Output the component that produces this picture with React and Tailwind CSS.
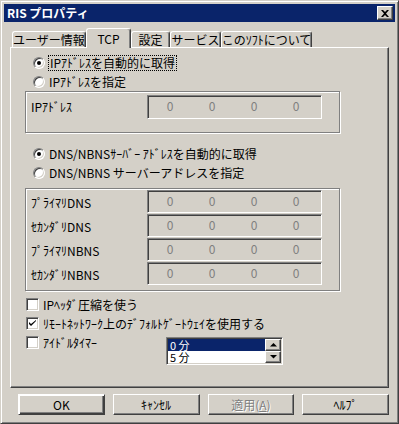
import React from "react";

const sunken =
  "border border-t-[#808080] border-l-[#808080] border-r-white border-b-white shadow-[inset_1px_1px_0_#404040,inset_-1px_-1px_0_#d4d0c8]";
const etched =
  "border border-[#808080] shadow-[inset_1px_1px_0_#fff,1px_1px_0_#fff]";
const button =
  "flex items-center justify-center w-[87px] h-[21px] border border-t-white border-l-white border-r-[#404040] border-b-[#404040] shadow-[inset_-1px_-1px_0_#808080]";

const Radio = ({ checked }) => (
  <span className="relative w-[12px] h-[12px] rounded-full bg-white border border-t-[#808080] border-l-[#808080] border-r-white border-b-white shadow-[inset_1px_1px_0_#404040,inset_-1px_-1px_0_#d4d0c8] flex items-center justify-center shrink-0">
    {checked && <span className="w-[4px] h-[4px] rounded-full bg-black" />}
  </span>
);

const RadioRow = ({ checked, focus, children }) => (
  <div className="h-[19px] flex items-center pl-[8px]">
    <Radio checked={checked} />
    <span
      className={
        focus
          ? "ml-[3px] px-[1px] py-[1px] border border-dotted border-black"
          : "ml-[4px] py-[2px]"
      }
    >
      {children}
    </span>
  </div>
);

const Check = ({ checked }) => (
  <span className={`w-[13px] h-[13px] bg-white shrink-0 flex items-center justify-center ${sunken}`}>
    {checked && (
      <svg width="7" height="7" viewBox="0 0 7 7">
        <path d="M0 2 L0 4 L2 6 L7 1 L7 0 L2 4 Z" fill="#000" />
      </svg>
    )}
  </span>
);

const IpField = ({ h }) => (
  <div className={`w-[175px] ${h} bg-[#d4d0c8] flex pl-[1px] ${sunken}`}>
    {[0, 1, 2, 3].map((i) => (
      <span key={i} className="w-[42px] text-center text-[#808080] pt-[4px]">
        0
      </span>
    ))}
  </div>
);

const Tab = ({ label, w, active }) =>
  active ? (
    <div
      className={`${w} h-[20px] -mb-[1px] relative z-10 bg-[#d4d0c8] rounded-t-[3px] border-t border-l border-r border-t-white border-l-white border-r-[#404040] shadow-[inset_-1px_0_0_#808080] flex justify-center pt-[4px] whitespace-nowrap`}
    >
      {label}
    </div>
  ) : (
    <div
      className={`${w} h-[16px] rounded-t-[3px] border-t border-l border-r border-t-white border-l-white border-r-[#404040] shadow-[inset_-1px_0_0_#808080] flex justify-center pt-[2px] whitespace-nowrap`}
    >
      {label}
    </div>
  );

export default function App() {
  return (
    <div className="w-[399px] h-[424px] bg-[#d4d0c8] border border-t-[#d4d0c8] border-l-[#d4d0c8] border-r-[#404040] border-b-[#404040] shadow-[inset_1px_1px_0_#fff,inset_-1px_-1px_0_#808080] p-[3px] flex flex-col font-['Noto_Sans_CJK_JP','Noto_Sans',sans-serif] text-[12px] leading-[12px] text-black overflow-hidden">
      {/* title bar */}
      <div className="h-[18px] bg-[#0a246a] flex items-center justify-between pl-[3px] pr-[2px]">
        <span className="text-white font-bold">RIS プロパティ</span>
        <span className="w-[16px] h-[14px] bg-[#d4d0c8] border border-t-white border-l-white border-r-[#404040] border-b-[#404040] shadow-[inset_-1px_-1px_0_#808080] flex items-center justify-center">
          <svg width="8" height="7" viewBox="0 0 8 7">
            <path d="M0 0h2l2 2 2-2h2L5 3.5 8 7H6L4 5 2 7H0l3-3.5z" fill="#000" />
          </svg>
        </span>
      </div>

      <div className="flex-1 px-[6px]">
        {/* tabs */}
        <div className="mt-[6px] h-[19px] flex items-end pl-[2px]">
          <Tab label="ユーザー情報" w="w-[74px]" />
          <Tab label="TCP" w="w-[45px]" active />
          <Tab label="設定" w="w-[39px]" />
          <Tab label="サービス" w="w-[51px]" />
          <Tab label="このｿﾌﾄについて" w="w-[91px]" />
        </div>

        {/* panel */}
        <div className="w-[379px] h-[341px] border border-t-white border-l-white border-r-[#404040] border-b-[#404040] shadow-[inset_-1px_-1px_0_#808080] pl-[14px] flex flex-col">
          <div className="mt-[5px]">
            <RadioRow checked focus>
              IPｱﾄﾞﾚｽを自動的に取得
            </RadioRow>
            <RadioRow>IPｱﾄﾞﾚｽを指定</RadioRow>
          </div>

          <div className={`w-[315px] h-[42px] ${etched} flex items-start pl-[5px] pt-[3px]`}>
            <span className="w-[116px] h-[24px] flex items-center">IPｱﾄﾞﾚｽ</span>
            <IpField h="h-[24px]" />
          </div>

          <div className="mt-[11px]">
            <RadioRow checked>DNS/NBNSｻｰﾊﾞｰ ｱﾄﾞﾚｽを自動的に取得</RadioRow>
            <RadioRow>DNS/NBNS サーバーアドレスを指定</RadioRow>
          </div>

          <div className={`mt-[6px] w-[315px] h-[103px] ${etched} pl-[5px] pt-[1px] flex flex-col`}>
            {["ﾌﾟﾗｲﾏﾘDNS", "ｾｶﾝﾀﾞﾘDNS", "ﾌﾟﾗｲﾏﾘNBNS", "ｾｶﾝﾀﾞﾘNBNS"].map((l) => (
              <div key={l} className="h-[24px] flex items-start">
                <span className="w-[116px] h-[23px] flex items-center pt-[2px]">{l}</span>
                <IpField h="h-[23px]" />
              </div>
            ))}
          </div>

          <div className="mt-[4px] pl-[1px]">
            <div className="h-[19px] flex items-center gap-[4px]">
              <Check />
              <span>IPﾍｯﾀﾞ圧縮を使う</span>
            </div>
            <div className="h-[19px] flex items-center gap-[4px]">
              <Check checked />
              <span>ﾘﾓｰﾄﾈｯﾄﾜｰｸ上のﾃﾞﾌｫﾙﾄｹﾞｰﾄｳｪｲを使用する</span>
            </div>
            <div className="flex items-start">
              <div className="w-[140px] h-[19px] flex items-center gap-[4px]">
                <Check />
                <span>ｱｲﾄﾞﾙﾀｲﾏｰ</span>
              </div>
              <div className={`mt-[4px] w-[117px] h-[28px] bg-white flex p-[1px] ${sunken}`}>
                <div className="flex-1 flex flex-col text-[11px] leading-[11px]">
                  <div className="h-[12px] bg-[#0a246a] text-white px-[2px] flex items-center">
                    0 分
                  </div>
                  <div className="h-[12px] px-[2px] flex items-center">5 分</div>
                </div>
                <div className="w-[16px] flex flex-col">
                  {["M0 3.5 3.5 0 7 3.5z", "M0 0h7L3.5 3.5z"].map((d) => (
                    <span
                      key={d}
                      className="h-[12px] bg-[#d4d0c8] border border-t-white border-l-white border-r-[#404040] border-b-[#404040] shadow-[inset_-1px_-1px_0_#808080] flex items-center justify-center"
                    >
                      <svg width="7" height="4" viewBox="0 0 7 4">
                        <path d={d} fill="#000" />
                      </svg>
                    </span>
                  ))}
                </div>
              </div>
            </div>
          </div>
        </div>

        {/* buttons */}
        <div className="mt-[6px] pl-[8px] flex gap-[8px]">
          <div className={`${button} border-black shadow-[inset_1px_1px_0_#fff,inset_-1px_-1px_0_#404040,inset_-2px_-2px_0_#808080]`}>
            OK
          </div>
          <div className={button}>ｷｬﾝｾﾙ</div>
          <div className={`${button} text-[#808080] [text-shadow:1px_1px_0_#fff]`}>
            適用(<span className="underline">A</span>)
          </div>
          <div className={button}>ﾍﾙﾌﾟ</div>
        </div>
      </div>
    </div>
  );
}
